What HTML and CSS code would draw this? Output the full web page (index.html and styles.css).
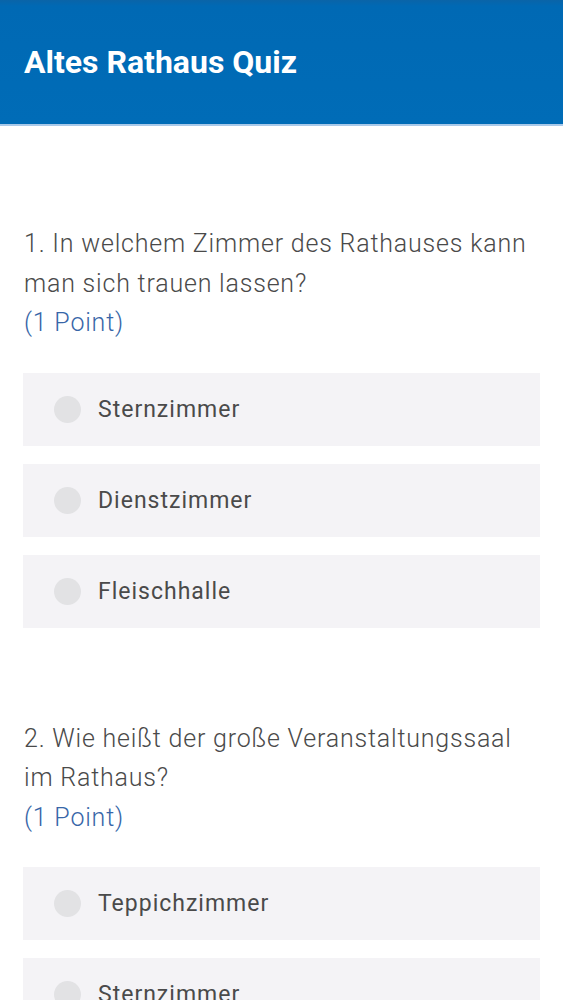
FILE: index.html
```html
<!DOCTYPE html>
<html lang="de">
<head>
<meta charset="utf-8">
<title>Altes Rathaus Quiz</title>
<link rel="stylesheet" href="styles.css">
</head>
<body>
<header class="appbar">
  <h1 class="title">Altes Rathaus Quiz</h1>
</header>
<main class="quiz">
  <section class="question">
    <p class="q-text">1. In welchem Zimmer des Rathauses kann man sich trauen lassen?</p>
    <p class="q-points">(1 Point)</p>
    <ul class="options">
      <li class="option"><span class="radio"></span><span class="label">Sternzimmer</span></li>
      <li class="option"><span class="radio"></span><span class="label">Dienstzimmer</span></li>
      <li class="option"><span class="radio"></span><span class="label">Fleischhalle</span></li>
    </ul>
  </section>
  <section class="question">
    <p class="q-text">2. Wie heißt der große Veranstaltungssaal im Rathaus?</p>
    <p class="q-points">(1 Point)</p>
    <ul class="options">
      <li class="option"><span class="radio"></span><span class="label">Teppichzimmer</span></li>
      <li class="option"><span class="radio"></span><span class="label">Sternzimmer</span></li>
      <li class="option"><span class="radio"></span><span class="label">Festsaal</span></li>
    </ul>
  </section>
</main>
</body>
</html>
```
FILE: styles.css
```css
html, body {
  margin: 0;
  padding: 0;
  background: #ffffff;
  font-family: Roboto, "Liberation Sans", Arial, sans-serif;
}

.appbar {
  height: 124px;
  background: linear-gradient(#0a64a8 0px, #0069b4 6px, #006cb7 100%);
  border-bottom: 2px solid #a9c9e9;
  display: flex;
  align-items: center;
  padding: 0 24px;
  box-sizing: content-box;
}

.title {
  margin: 0;
  color: #ffffff;
  font-size: 32px;
  font-weight: 700;
  letter-spacing: 0;
  line-height: 1;
}

.quiz {
  padding: 98px 23px 0 24px;
  display: flex;
  flex-direction: column;
  gap: 91px;
}

.question {
  display: flex;
  flex-direction: column;
}

.q-text, .q-points {
  margin: 0;
  font-size: 25px;
  letter-spacing: 0.8px;
  line-height: 39.5px;
  font-weight: 300;
  color: #4a4a4a;
}

.q-text {
  padding-right: 10px;
}

.q-points {
  color: #3866a8;
}

.options {
  list-style: none;
  margin: 30px 0 0 -1px;
  padding: 0;
  display: flex;
  flex-direction: column;
  gap: 18px;
}

.option {
  height: 73px;
  background: #f4f3f6;
  display: flex;
  align-items: center;
  padding-left: 31px;
  gap: 17px;
}

.radio {
  width: 27px;
  height: 27px;
  border-radius: 50%;
  background: #e2e2e4;
  flex: none;
}

.label {
  font-size: 23px;
  letter-spacing: 1px;
  color: #4a4a4a;
  font-weight: 400;
}
```
